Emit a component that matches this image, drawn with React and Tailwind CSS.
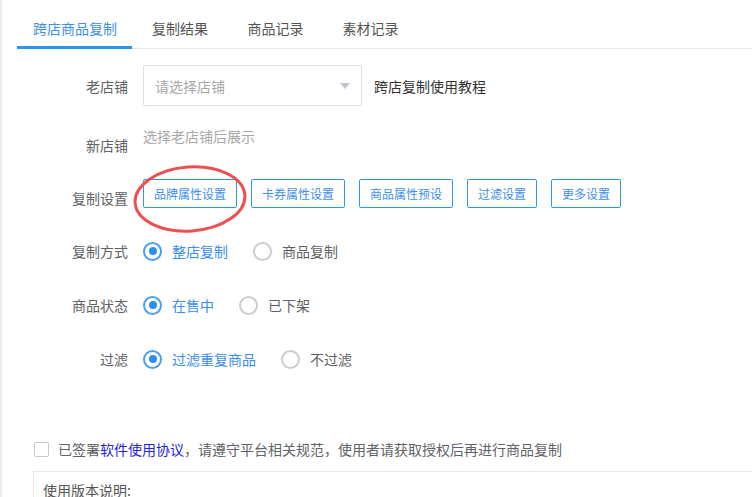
import React, { useState } from 'react';

const tabs = ['跨店商品复制', '复制结果', '商品记录', '素材记录'];
const settingButtons = ['品牌属性设置', '卡券属性设置', '商品属性预设', '过滤设置', '更多设置'];

const Radio = ({ checked, label, onClick }) => (
    <div className="flex items-center cursor-pointer" onClick={onClick}>
        <span
            className={`w-[19px] h-[19px] rounded-full border-2 flex items-center justify-center ${checked ? 'border-[#4a9ff0]' : 'border-[#cdcdcd]'}`}
        >
            {checked && <span className="w-[8px] h-[8px] rounded-full bg-[#2b8ff0]" />}
        </span>
        <span className={`ml-[10px] ${checked ? 'text-[#3b8ee8]' : 'text-[#606266]'}`}>{label}</span>
    </div>
);

const RadioRow = ({ label, options, mt }) => {
    const [value, setValue] = useState(0);
    return (
        <div className={`flex items-center h-[20px] ${mt}`}>
            <div className="w-[111px] text-right text-[#606266]">{label}</div>
            <div className="ml-[15px] flex items-center gap-[25px]">
                {options.map((opt, i) => (
                    <Radio key={opt} label={opt} checked={value === i} onClick={() => setValue(i)} />
                ))}
            </div>
        </div>
    );
};

const App = () => {
    const [activeTab, setActiveTab] = useState(0);
    const [agreed, setAgreed] = useState(false);

    return (
        <div
            className="relative w-[752px] h-[497px] overflow-hidden bg-white border-l-2 border-[#ececec] text-[14px] leading-[20px]"
            style={{ fontFamily: '"Noto Sans CJK SC", "Noto Sans", sans-serif' }}
        >
            {/* Tabs */}
            <div className="ml-[15px] flex border-b border-[#e8e8e8] h-[49px]">
                {tabs.map((tab, i) => (
                    <div
                        key={tab}
                        onClick={() => setActiveTab(i)}
                        className={`relative h-[48px] pt-[18px] cursor-pointer ${i === 0 ? 'pl-[16px] pr-[15px]' : i === 1 ? 'px-[20px]' : 'px-[19.5px]'} ${activeTab === i ? 'text-[#3d8fe8]' : 'text-[#555]'}`}
                    >
                        <span>{tab}</span>
                        {activeTab === i && (
                            <span className="absolute left-0 right-0 -bottom-[1px] h-[3px] bg-[#2b95ea]" />
                        )}
                    </div>
                ))}
            </div>

            {/* Form */}
            <div className="pl-[15px]">
                {/* 老店铺 */}
                <div className="flex items-center mt-[16px]">
                    <div className="w-[111px] text-right text-[#606266]">老店铺</div>
                    <div className="ml-[15px] w-[219px] h-[41px] border border-[#dcdfe6] rounded-[2px] flex items-center justify-between pl-[11px] pr-[11px]">
                        <span className="text-[#a8a8a8]">请选择店铺</span>
                        <span className="w-0 h-0 border-l-[5px] border-r-[5px] border-t-[6px] border-l-transparent border-r-transparent border-t-[#c0c4cc]" />
                    </div>
                    <span className="ml-[12px] text-[#333]">跨店复制使用教程</span>
                </div>

                {/* 新店铺 */}
                <div className="flex items-start mt-[20px]">
                    <div className="w-[111px] text-right text-[#606266] mt-[9px]">新店铺</div>
                    <div className="ml-[15px] text-[#a8a8a8]">选择老店铺后展示</div>
                </div>

                {/* 复制设置 */}
                <div className="relative flex items-start mt-[24px]">
                    <div className="w-[111px] text-right text-[#606266] mt-[9px]">复制设置</div>
                    <div className="ml-[15px] flex gap-[14px]">
                        {settingButtons.map((b) => (
                            <button
                                key={b}
                                className="h-[29px] px-[10px] border border-[#2b95ef] rounded-[2px] text-[12px] text-[#3d8fe8] bg-white"
                            >
                                {b}
                            </button>
                        ))}
                    </div>
                    {/* red annotation circle */}
                    <svg
                        className="absolute left-[115px] -top-[15px] pointer-events-none"
                        width="118"
                        height="70"
                        viewBox="0 0 118 70"
                    >
                        <ellipse
                            cx="58"
                            cy="35"
                            rx="55"
                            ry="32"
                            fill="none"
                            stroke="#f04f4f"
                            strokeWidth="3"
                            transform="rotate(-4 58 35)"
                        />
                    </svg>
                </div>

                <RadioRow label="复制方式" options={['整店复制', '商品复制']} mt="mt-[33px]" />
                <RadioRow label="商品状态" options={['在售中', '已下架']} mt="mt-[34px]" />
                <RadioRow label="过滤" options={['过滤重复商品', '不过滤']} mt="mt-[34px]" />

                {/* Agreement */}
                <div className="flex items-center h-[20px] mt-[70px] ml-[17px]">
                    <span
                        onClick={() => setAgreed(!agreed)}
                        className={`w-[15px] h-[15px] border rounded-[2px] cursor-pointer ${agreed ? 'bg-[#409eff] border-[#409eff]' : 'border-[#c8c8c8]'}`}
                    />
                    <span className="ml-[9px] text-[#606266]">
                        已签署<span className="text-[#2424d6]">软件使用协议</span>，请遵守平台相关规范，使用者请获取授权后再进行商品复制
                    </span>
                </div>

                {/* Notes box */}
                <div className="mt-[12px] ml-[16px] border border-r-0 border-[#e8e8e8] pl-[9px] pt-[8px] h-[60px]">
                    <span className="text-[#555]">使用版本说明:</span>
                </div>
            </div>
        </div>
    );
};

export default App;
